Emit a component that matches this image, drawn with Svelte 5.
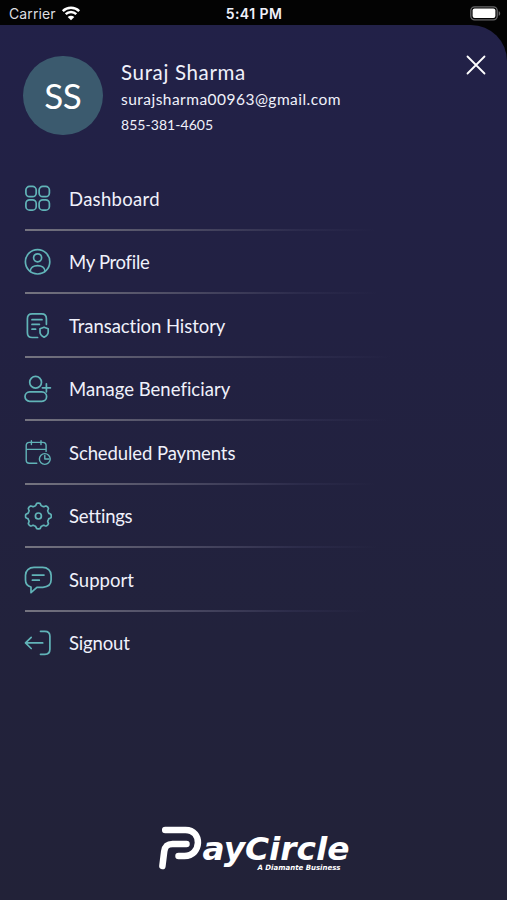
<script>
  const items = [
    { id: 'dashboard', label: 'Dashboard', spacing: 0.3, fade: 376 },
    { id: 'profile', label: 'My Profile', spacing: -0.3, fade: 378 },
    { id: 'history', label: 'Transaction History', spacing: -0.06, fade: 392 },
    { id: 'beneficiary', label: 'Manage Beneficiary', spacing: 0.02, fade: 388 },
    { id: 'scheduled', label: 'Scheduled Payments', spacing: -0.09, fade: 376 },
    { id: 'settings', label: 'Settings', spacing: -0.25, fade: 378 },
    { id: 'support', label: 'Support', spacing: 0, fade: 368 },
    { id: 'signout', label: 'Signout', spacing: -0.15, fade: 0 }
  ];

  const gear = (() => {
    const points = [];
    for (let i = 0; i < 128; i++) {
      const a = (i / 128) * Math.PI * 2;
      const r = 11.7 + 1.15 * Math.tanh(2.3 * Math.cos(8 * a));
      points.push(`${(14.4 + r * Math.sin(a)).toFixed(2)} ${(14 - r * Math.cos(a)).toFixed(2)}`);
    }
    return `M${points.join('L')}Z`;
  })();
</script>

<div class="screen">
  <div class="status">
    <div class="carrier">
      <span>Carrier</span>
      <svg class="wifi" width="20" height="15" viewBox="0 0 20 15">
        <path d="M1.8 5.1C6.3.7 13.7.7 18.2 5.1M4.7 8.2c3-2.9 7.6-2.9 10.6 0" fill="none" stroke="#fff" stroke-width="2.5" />
        <path d="M10 14.2 6.7 10.9c1.8-1.7 4.8-1.7 6.6 0Z" fill="#fff" />
      </svg>
    </div>
    <span class="time">5:41 PM</span>
    <svg class="battery" width="31" height="15" viewBox="0 0 31 15">
      <rect x=".8" y=".8" width="26.4" height="13" rx="3.8" fill="none" stroke="#68686a" stroke-width="1.3" />
      <rect x="2.6" y="2.6" width="22.8" height="9.4" rx="2" fill="#fff" />
      <path d="M28.7 5.2c2 .7 2 3.8 0 4.5Z" fill="#68686a" />
    </svg>
  </div>

  <main class="drawer">
    <header>
      <div class="avatar">SS</div>
      <div class="user">
        <div class="name">Suraj Sharma</div>
        <div class="email">surajsharma00963@gmail.com</div>
        <div class="phone">855-381-4605</div>
      </div>
      <svg class="close" width="20" height="20" viewBox="0 0 20 20">
        <path d="m1.5 1.5 17 17M18.5 1.5l-17 17" stroke="#fff" stroke-width="1.8" stroke-linecap="round" />
      </svg>
    </header>

    <nav>
      {#each items as item}
        <div class="row">
          <svg class="icon" width="28" height="28" viewBox="0 0 28 28">
            {#if item.id === 'dashboard'}
              <rect x="1.9" y="1.4" width="10.3" height="10.3" rx="3.7" />
              <rect x="15.1" y="1.4" width="10.3" height="10.3" rx="3.7" />
              <rect x="1.9" y="14.8" width="10.3" height="10.3" rx="3.7" />
              <rect x="15.1" y="14.8" width="10.3" height="10.3" rx="3.7" />
            {:else if item.id === 'profile'}
              <circle cx="13.6" cy="13.8" r="12.2" />
              <circle cx="13.6" cy="9.8" r="4" />
              <path d="M6.2 23.3c.2-7.7 14.6-7.7 14.8 0" />
            {:else if item.id === 'history'}
              <path d="M13.6 25.5H8.2c-3.4 0-4.8-1.4-4.8-4.8V6.7c0-3.4 1.4-4.8 4.8-4.8h9.4c3.4 0 4.8 1.4 4.8 4.8v5.6M8 7.7h10M8 12.4h7.4M8 17.2h3.6" />
              <path d="m20.1 15.2 4.1 1.6v3.4c0 2-1.5 3.6-4.1 5-2.6-1.4-4.1-3-4.1-5v-3.4Z" />
            {:else if item.id === 'beneficiary'}
              <circle cx="11.6" cy="7.3" r="5.9" />
              <rect x="1" y="16.9" width="21.6" height="9.4" rx="4.7" />
              <path d="M22.4 8.8v8M18.4 12.8h8" />
            {:else if item.id === 'scheduled'}
              <g class="thin">
                <path d="M12.8 24.2H5.4c-2.1 0-3.2-1.1-3.2-3.2V6.6c0-2.1 1.1-3.2 3.2-3.2h13.5c2.1 0 3.2 1.1 3.2 3.2v5.8M2.2 10.4h19.9M7.4 1.8v3.8M17 1.8v3.8" />
                <circle cx="20.8" cy="20" r="5.4" />
                <path d="M20.8 16.5V20h4.1" />
              </g>
            {:else if item.id === 'settings'}
              <path d={gear} />
              <circle cx="14.4" cy="14" r="3" />
            {:else if item.id === 'support'}
              <path d="M7 21v5.7l5.9-5.4h6c4.9-.4 8.2-3 8.2-7.3V9.2c0-4.7-3.6-7.8-8.5-7.8H10c-4.9 0-8.5 3.1-8.5 7.8v4.9C1.5 18.4 3.7 20.4 7 21Z" />
              <path d="M8.4 9.1H20M8.4 14.2h6.9" />
            {:else}
              <path d="M16.5 2.3h4.4c3.6 0 5 1.5 5 5v13c0 3.5-1.4 5-5 5h-4.4M18.7 13.9H1.6M7.2 8.3l-5.7 5.6 5.7 5.6" />
            {/if}
          </svg>
          <span class="label" style:letter-spacing="{item.spacing}px">{item.label}</span>
          {#if item.fade}
            <i class="rule" style:width="{item.fade - 25}px"></i>
          {/if}
        </div>
      {/each}
    </nav>

    <footer>
      <svg width="194" height="50" viewBox="0 0 194 50">
        <g fill="none" stroke="#fff" stroke-width="6.5" stroke-linecap="round" stroke-linejoin="round">
          <path d="M7.2 6.9H27.5C45 6.9 43.5 33 26.5 33H20.5" />
          <path d="M28.5 21H14.5C8.5 21 6.9 24 6.2 28.5L4.4 43" />
        </g>
        <text x="44.5" y="37" font-size="32.5" textLength="147" lengthAdjust="spacingAndGlyphs">ayCircle</text>
        <text x="99.5" y="46.8" font-size="7.3" textLength="83" lengthAdjust="spacingAndGlyphs">A Diamante Business</text>
      </svg>
    </footer>
  </main>
</div>

<style>
  :global(body) { background: #000; }
  .screen {
    width: 507px;
    height: 900px;
    display: flex;
    flex-direction: column;
    background: #030303;
    color: #f0f1fb;
    font-family: Lato, "Liberation Sans", sans-serif;
    overflow: hidden;
  }
  .status {
    height: 25px;
    flex: none;
    display: grid;
    grid-template-columns: 1fr auto 1fr;
    align-items: center;
    padding: 2px 6px 0 9px;
    box-sizing: border-box;
    font-family: Inter, sans-serif;
    font-size: 14px;
    line-height: 18px;
  }
  .carrier { display: flex; align-items: center; gap: 5px; color: #dedee0; letter-spacing: .1px; }
  .time { font-weight: 600; font-size: 14px; letter-spacing: .45px; margin-right: 2px; }
  .battery { justify-self: end; }
  .drawer {
    flex: 1;
    display: flex;
    flex-direction: column;
    border-radius: 0 36px 0 0;
    background: linear-gradient(#222148, #222142 35%, #22223c 70%, #222238);
  }
  header {
    height: 142px;
    box-sizing: border-box;
    display: flex;
    align-items: flex-start;
    padding: 30.5px 21px 0 23px;
  }
  .avatar {
    width: 79.5px;
    height: 79.5px;
    border-radius: 50%;
    background: #3b5a6e;
    color: #fff;
    display: flex;
    align-items: center;
    justify-content: center;
    font-size: 35px;
    letter-spacing: -.5px;
    box-sizing: border-box;
  }
  .user { flex: 1; padding: 3px 0 0 18.5px; white-space: nowrap; }
  .name { font-size: 20.5px; line-height: 26px; letter-spacing: .65px; }
  .email { font-size: 15.5px; line-height: 29px; letter-spacing: .47px; }
  .phone { font-size: 14px; line-height: 21px; letter-spacing: .05px; }
  .close { margin-top: -.5px; }
  nav { display: flex; flex-direction: column; }
  .row {
    position: relative;
    height: 63.5px;
    display: flex;
    align-items: center;
    padding-left: 24px;
    gap: 17px;
  }
  .icon { fill: none; stroke: #61b4b8; stroke-width: 1.7; stroke-linecap: round; stroke-linejoin: round; }
  .thin { stroke-width: 1.4; }
  .label { font-size: 18.5px; line-height: 28px; white-space: nowrap; }
  .rule {
    position: absolute;
    left: 25px;
    bottom: -.2px;
    height: 2px;
    background: linear-gradient(90deg, #757480, #4b4a63 45%, #35345580 78%, transparent);
  }
  footer { margin-top: auto; height: 77px; display: flex; padding-left: 158px; }
  footer text { fill: #fff; font-family: "DejaVu Sans", sans-serif; font-weight: 700; font-style: italic; }
</style>
